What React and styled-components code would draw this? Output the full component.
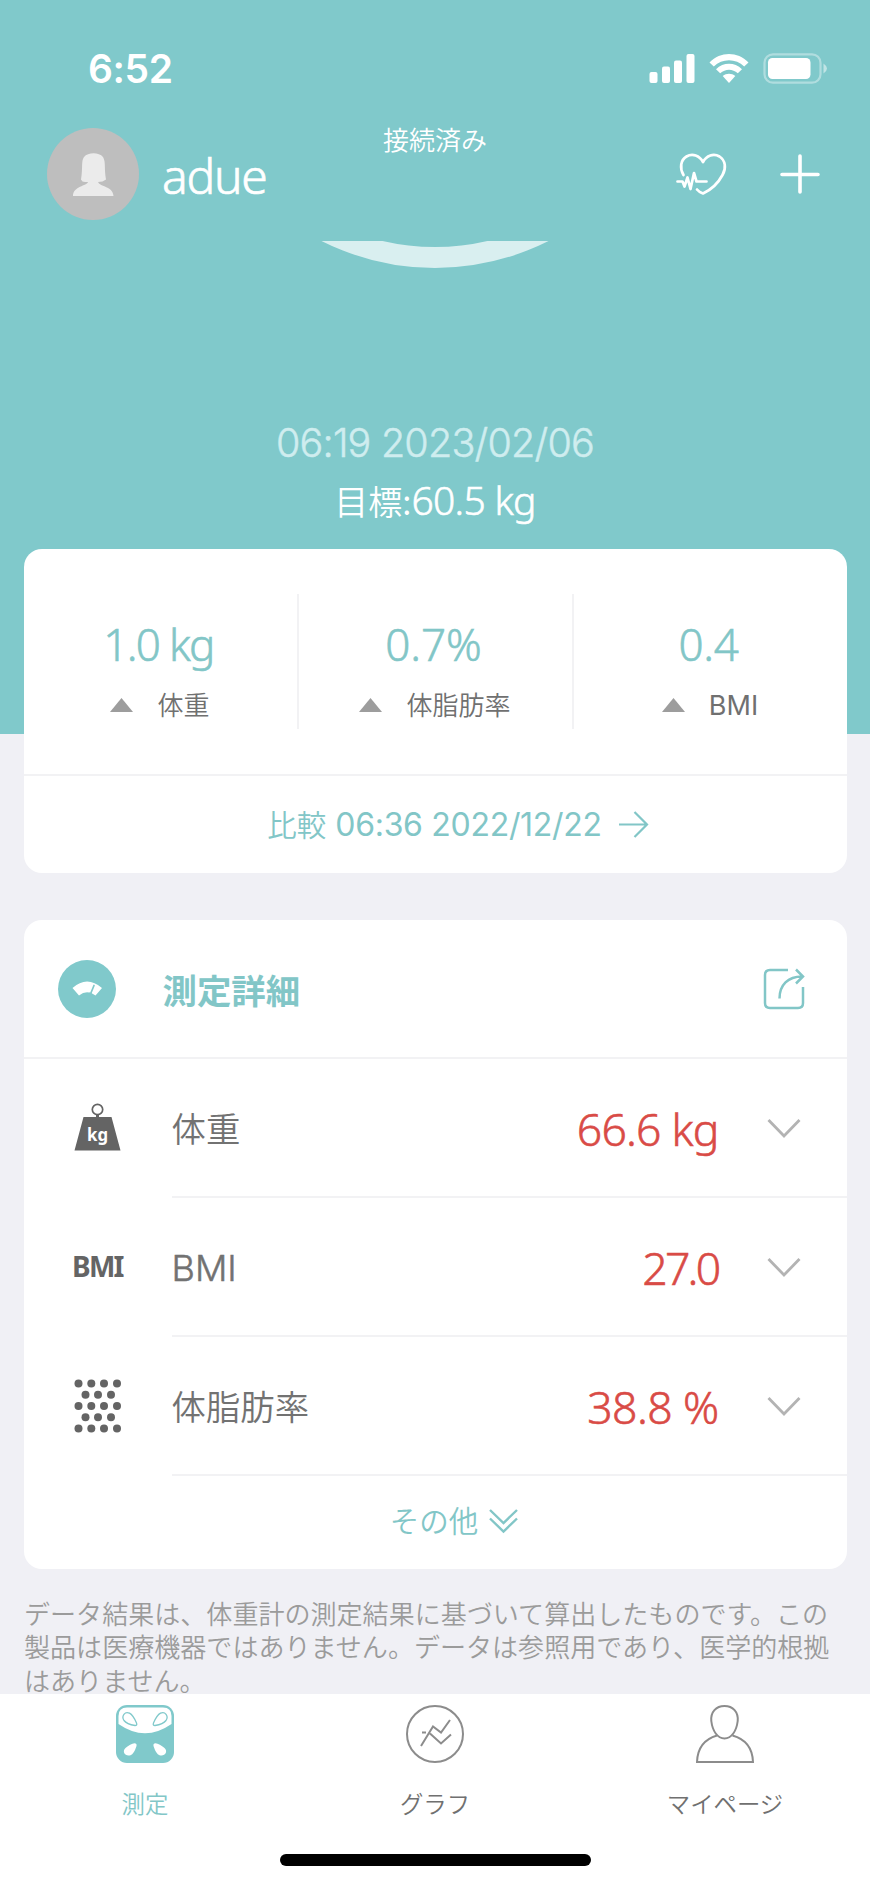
import React from "react";
import styled, { createGlobalStyle } from "styled-components";

const teal = "#80c9cb";
const tealText = "#82c6c7";
const line = "#f2f2f4";
const latin = `"Noto Sans", "Noto Sans CJK JP", sans-serif`;
const cjk = `"Noto Sans CJK JP", sans-serif`;
const inter = `Inter, "Noto Sans CJK JP", sans-serif`;

const Global = createGlobalStyle`
  * { box-sizing: border-box; }
  body { margin: 0; background: #f0f0f5; }
  svg { display: block; flex: none; }
`;

const Screen = styled.div`
  width: 870px;
  height: 1884px;
  display: flex;
  flex-direction: column;
  overflow: hidden;
  background: #f0f0f5;
  font-family: ${cjk};
  font-weight: 350;
`;

const Hero = styled.header`
  height: 734px;
  flex: none;
  background: ${teal};
  color: #fff;
`;

const StatusBar = styled.div`
  height: 128px;
  padding: 0 43px 0 88px;
  display: flex;
  justify-content: space-between;
  align-items: flex-start;
`;

const Clock = styled.div`
  margin-top: 45px;
  font: 600 39px/48px ${inter};
  letter-spacing: -0.4px;
`;

const StatusIcons = styled.div`
  margin-top: 53px;
  display: flex;
  gap: 14px;
`;

const ProfileBar = styled.div`
  height: 113px;
  padding: 0 50px 0 47px;
  display: grid;
  grid-template-columns: 92px 205px 1fr auto;
  align-items: start;
`;

const UserName = styled.div`
  padding-left: 23px;
  font: 300 48px/60px ${latin};
  -webkit-text-stroke: 0.7px currentColor;
  letter-spacing: ${(p) => p.$track}px;
  margin-top: 18px;
`;

const Connection = styled.div`
  width: 182px;
  text-align: center;
  font-size: 26px;
  line-height: 26px;
  margin-top: -2px;
`;

const Actions = styled.div`
  display: flex;
  gap: 52px;
  margin-top: 24px;
`;

const Gauge = styled.div`
  height: 181px;
  display: flex;
  justify-content: center;
`;

const Measured = styled.div`
  height: 42px;
  text-align: center;
  font: 300 39.5px/42px ${inter};
  -webkit-text-stroke: 0.5px currentColor;
  letter-spacing: ${(p) => p.$track}px;
  color: #cfedef;
`;

const Goal = styled.div`
  height: 86px;
  padding-top: 11px;
  display: flex;
  justify-content: center;
  align-items: baseline;
  font: 350 34px/50px ${cjk};
`;

const GoalValue = styled.span`
  font: 300 39px/50px ${latin};
  -webkit-text-stroke: 0.6px currentColor;
  letter-spacing: ${(p) => p.$track}px;
`;

const Card = styled.section`
  flex: none;
  width: 823px;
  margin: ${(p) => p.$top}px 0 0 23.5px;
  background: #fff;
  border-radius: 18px;
  overflow: hidden;
`;

const Summary = styled.div`
  height: 227px;
  display: grid;
  grid-template-columns: 275px 275px 1fr;
  padding-top: 45px;
  border-bottom: 2px solid ${line};
`;

const Stat = styled.div`
  height: 135px;
  padding-top: 22.5px;
  display: flex;
  flex-direction: column;
  align-items: center;
  border-right: ${(p) => (p.$last ? "0" : `2px solid ${line}`)};
`;

const StatValue = styled.div`
  margin-right: 3px;
  font: 300 44px/56px ${latin};
  -webkit-text-stroke: 0.6px currentColor;
  letter-spacing: ${(p) => p.$track}px;
  color: ${tealText};
`;

const StatLabel = styled.div`
  display: flex;
  align-items: center;
  gap: 24px;
  height: 30px;
  margin-top: 17.5px;
  color: #707070;
`;

const StatName = styled.span`
  margin-top: ${(p) => (p.$latin ? "2px" : "-2px")};
  font: ${(p) => (p.$latin ? `400 27px/30px ${inter}` : `350 26px/30px ${cjk}`)};
`;

const Compare = styled.div`
  height: 97px;
  padding-left: 46px;
  display: flex;
  align-items: center;
  justify-content: center;
  color: ${tealText};
  font: 350 29.5px/40px ${cjk};
`;

const CompareDate = styled.span`
  margin: 2px 17px 0 9px;
  font: 400 32px/40px ${inter};
  letter-spacing: ${(p) => p.$track}px;
`;

const CompareWord = styled.span`
  margin-top: -2px;
`;

const DetailHeader = styled.div`
  height: 139px;
  padding: 1px 42px 0 34px;
  display: flex;
  align-items: center;
  border-bottom: 2px solid ${line};
`;

const DetailTitle = styled.h2`
  flex: 1;
  margin: 0 0 0 47px;
  font: 700 34.4px/44px ${cjk};
  color: ${tealText};
`;

const Row = styled.div`
  height: 139px;
  display: grid;
  grid-template-columns: 148px 1fr;
`;

const RowIcon = styled.div`
  display: flex;
  align-items: center;
  padding: 0 0 ${(p) => p.$lift ?? 2}px 50px;
`;

const RowBody = styled.div`
  display: flex;
  align-items: center;
  padding-right: 46px;
  padding-top: 3px;
  border-bottom: 2px solid ${line};
`;

const RowLabel = styled.div`
  flex: 1;
  margin-top: ${(p) => (p.$latin ? "1px" : "-3px")};
  color: #727272;
  -webkit-text-stroke: ${(p) => (p.$latin ? "0.5px currentColor" : "0")};
  font: ${(p) => (p.$latin ? `300 36px/44px ${inter}` : `350 34.4px/44px ${cjk}`)};
`;

const RowValue = styled.div`
  padding-top: 1px;
  margin-right: 48px;
  font: 300 44.5px/60px ${latin};
  -webkit-text-stroke: 0.6px currentColor;
  letter-spacing: ${(p) => p.$track}px;
  color: #d94b46;
`;

const More = styled.div`
  height: 93px;
  padding-left: 38px;
  padding-bottom: 3px;
  display: flex;
  align-items: center;
  justify-content: center;
  gap: 11px;
  color: ${tealText};
  font: 350 29.5px/40px ${cjk};
`;

const MoreWord = styled.span`
  margin-top: -3px;
`;

const Notice = styled.p`
  height: 125px;
  margin: 0;
  padding: 28.5px 30px 0 24px;
  flex: none;
  color: #9b9b9b;
  font: 350 26.05px/33.3px ${cjk};
`;

const NoticeLine = styled.span`
  display: block;
  white-space: nowrap;
`;

const TabBar = styled.nav`
  height: 190px;
  flex: none;
  background: #fff;
  display: flex;
  flex-direction: column;
  align-items: center;
`;

const Tabs = styled.div`
  width: 870px;
  height: 160px;
  padding-top: 11px;
  display: grid;
  grid-template-columns: repeat(3, 1fr);
`;

const Tab = styled.div`
  display: flex;
  flex-direction: column;
  align-items: center;
  gap: 25px;
  font-size: 23.4px;
  line-height: 30px;
  color: ${(p) => (p.$active ? tealText : "#707070")};
`;

const HomeIndicator = styled.div`
  width: 311px;
  height: 12px;
  border-radius: 6px;
  background: #000;
`;

const Signal = () => (
  <svg width="46" height="31" fill="#fff">
    <rect x="0.5" y="19" width="8" height="11" rx="2" />
    <rect x="13" y="13.5" width="8" height="16.5" rx="2" />
    <rect x="25" y="7.5" width="8" height="22.5" rx="2" />
    <rect x="37.5" y="1" width="8" height="29" rx="2" />
  </svg>
);

const Wifi = () => (
  <svg width="40" height="31" fill="#fff">
    <path d="M.5 9.5C11.500-1.800 28.500-1.800 39.500 9.500L35.200 13.500C27 5.300 13 5.300 4.800 13.500Z" />
    <path d="M7 16.200C14.500 9 25.500 9 33 16.200L28.800 20.300C23.500 15.400 16.500 15.400 11.200 20.300Z" />
    <path d="M13.700 23C17.300 20 22.700 20 26.300 23L20 30Z" />
  </svg>
);

const Battery = () => (
  <svg width="64" height="32">
    <rect x="1.500" y="1.300" width="56" height="28.400" rx="8.500" fill="none" stroke="#fff" strokeOpacity=".38" strokeWidth="2.200" />
    <rect x="5" y="5" width="42.500" height="21" rx="4.500" fill="#fff" />
    <path d="M60.500 10.500Q64 13 64 15.500T60.500 20.500Z" fill="#fff" fillOpacity=".5" />
  </svg>
);

const Avatar = () => (
  <svg width="92" height="92">
    <circle cx="46" cy="46" r="46" fill="#bebebe" />
    <path d="M26 68C26 58 40 58 41 54H38Q35 54 34 51.500C36 40 34 33 37 29C41 24 52 24 56 29C59 34 57 40 59 51.500Q56 54 51 54C53 59 66 58 66.500 68Z" fill="#ebebeb" />
  </svg>
);

const HeartPulse = () => (
  <svg width="52" height="44" fill="none" stroke="#fff" strokeWidth="2.700" strokeLinecap="round" strokeLinejoin="round">
    <path d="M7.500 23C3.500 16 4.500 8 10.500 4.500C16.500 1 23.500 3.500 27 10C30.500 3.500 37.500 1 43.500 4.500C49.500 8.500 50.500 16 46.500 23C42.500 30.500 35.500 37.500 27 41.500Q23 40 21 37.500" />
    <path d="M1.500 29.500H6.500L8.500 34.500L11.500 25.500L14.500 37L18 21L20.500 29.500H30.500" />
  </svg>
);

const Plus = () => (
  <svg width="40" height="42" stroke="#fff" strokeWidth="3.600" strokeLinecap="round">
    <path d="M2 22.500H38M20 4V40" />
  </svg>
);

const GaugeArc = () => (
  <svg width="240" height="30" viewBox="0 0 240 30">
    <circle cx="120" cy="-225" r="241.500" fill="none" stroke="#d9eff0" strokeWidth="21" />
  </svg>
);

const Triangle = () => (
  <svg width="23" height="14">
    <path d="M0 14L11.500 0L23 14Z" fill="#9d9d9d" />
  </svg>
);

const Arrow = () => (
  <svg width="30" height="27" fill="none" stroke={tealText} strokeWidth="2.200">
    <path d="M0 13.500H28M15.500 1L28 13.500L15.500 26" />
  </svg>
);

const Dial = () => (
  <svg width="58" height="58">
    <circle cx="29" cy="29" r="29" fill={teal} />
    <path d="M14.500 28Q29 15 44 28L37.500 35.500Q29 29 21 35.500Z" fill="#fff" />
    <path d="M32.500 34L36 25.500" stroke={teal} strokeWidth="1.700" strokeLinecap="round" />
    <circle cx="31.500" cy="34.500" r="2" fill={teal} />
  </svg>
);

const Share = () => (
  <svg width="42" height="42" fill="none" stroke={tealText} strokeWidth="2.500">
    <path d="M25 2H7Q2 2 2 7V35Q2 40 7 40H35Q40 40 40 35V19" />
    <path d="M16.500 30.500C16.500 17 25 8.500 39 8.500M33 1.500L40 8.500L33 15.500" />
  </svg>
);

const Chevron = () => (
  <svg width="34" height="22" fill="none" stroke="#b3b3b3" strokeWidth="2.800">
    <path d="M1.500 2L17 18L32.500 2" />
  </svg>
);

const DoubleChevron = () => (
  <svg width="29" height="28" fill="none" stroke={tealText} strokeWidth="2.400">
    <path d="M1 3L14.500 16L28 3M1 11.500L14.500 24.500L28 11.500" />
  </svg>
);

const WeightIcon = () => (
  <svg width="48" height="50">
    <circle cx="23.500" cy="7.500" r="5.200" fill="none" stroke="#646464" strokeWidth="1.700" />
    <path d="M22 12.500H25V15H37.500L46.500 48.500H.5L9.500 15H22Z" fill="#646464" />
    <text x="23.500" y="38.500" textAnchor="middle" textLength="21" lengthAdjust="spacingAndGlyphs" fill="#fff" fontFamily="Noto Sans, sans-serif" fontWeight="700" fontSize="18">kg</text>
  </svg>
);

const BmiIcon = styled.span`
  margin-left: -1.5px;
  font: 700 28px/30px ${latin};
  letter-spacing: -1.7px;
  color: #646464;
`;

const FatIcon = () => (
  <svg width="48" height="54" fill="#646464">
    {[0, 1, 2, 3, 4].map((r) =>
      (r % 2 ? [11.500, 24, 37] : [4.500, 17.300, 30, 43]).map((x) => (
        <circle key={`${r}-${x}`} cx={x} cy={4.500 + r * 11.250} r="4" />
      ))
    )}
  </svg>
);

const ScaleTab = () => (
  <svg width="58" height="58">
    <rect width="58" height="58" rx="11" fill={teal} />
    <path d="M2.500 19V11Q2.500 2.500 11 2.500H47Q55.500 2.500 55.500 11V19Q29 37.500 2.500 19Z" fill="#fff" />
    <g fill="none" stroke={teal} strokeWidth="1.300">
      <path d="M20.500 18Q17 10 13.500 8.200C9 6 5 11 8 15.500C10.500 18.800 16 20 19 20.500Q21.500 20.500 20.500 18Z" />
      <path d="M37.500 18Q41 10 44.500 8.200C49 6 53 11 50 15.500C47.500 18.800 42 20 39 20.500Q36.500 20.500 37.500 18Z" />
    </g>
    <g fill="#fff">
      <path d="M20.500 41Q18 49 14.500 50.200C9.500 52 5.500 46.500 9.500 43C12.500 40.500 16 38.800 18.500 38.300Q21 38.500 20.500 41Z" />
      <path d="M37.500 41Q40 49 43.500 50.200C48.500 52 52.500 46.500 48.500 43C45.500 40.500 42 38.800 39.500 38.300Q37 38.500 37.500 41Z" />
    </g>
  </svg>
);

const GraphTab = () => (
  <svg width="58" height="58" fill="none" stroke="#8c8c8c" strokeWidth="2">
    <circle cx="29" cy="29" r="28" />
    <path d="M15 41L27 21.500L35 27.500L44 15M16 27.500H20M24 28.500L35 38.500L45 29.500" />
  </svg>
);

const UserTab = () => (
  <svg width="58" height="58" fill="none" stroke="#8c8c8c" strokeWidth="2">
    <path d="M28.500 1C20 1 14.500 7 15.300 16C16.500 26 21.500 33.500 28.500 33.500S40.500 26 41.700 16C42.500 7 37 1 28.500 1Z" />
    <path d="M21 30.500C9 34 1.500 43 1 57H57C56.500 43 49 34 36.500 30.500" />
  </svg>
);

export default function App() {
  return (
    <Screen>
      <Global />
      <Hero>
        <StatusBar>
          <Clock>6:52</Clock>
          <StatusIcons>
            <Signal />
            <Wifi />
            <Battery />
          </StatusIcons>
        </StatusBar>
        <ProfileBar>
          <Avatar />
          <UserName $track={-1.3}>adue</UserName>
          <Connection>接続済み</Connection>
          <Actions>
            <HeartPulse />
            <Plus />
          </Actions>
        </ProfileBar>
        <Gauge>
          <GaugeArc />
        </Gauge>
        <Measured $track={-0.8}>06:19 2023/02/06</Measured>
        <Goal>
          目標:<GoalValue $track={-0.7}>60.5 kg</GoalValue>
        </Goal>
      </Hero>

      <Card $top={-185.5}>
        <Summary>
          <Stat>
            <StatValue $track={-1.7}>1.0 kg</StatValue>
            <StatLabel><Triangle /><StatName>体重</StatName></StatLabel>
          </Stat>
          <Stat>
            <StatValue $track={-0.1}>0.7%</StatValue>
            <StatLabel><Triangle /><StatName>体脂肪率</StatName></StatLabel>
          </Stat>
          <Stat $last>
            <StatValue $track={-0.4}>0.4</StatValue>
            <StatLabel><Triangle /><StatName $latin>BMI</StatName></StatLabel>
          </Stat>
        </Summary>
        <Compare>
          <CompareWord>比較</CompareWord>
          <CompareDate $track={-0.3}>06:36 2022/12/22</CompareDate>
          <Arrow />
        </Compare>
      </Card>

      <Card $top={47}>
        <DetailHeader>
          <Dial />
          <DetailTitle>測定詳細</DetailTitle>
          <Share />
        </DetailHeader>
        <Row>
          <RowIcon><WeightIcon /></RowIcon>
          <RowBody>
            <RowLabel>体重</RowLabel>
            <RowValue $track={-0.8}>66.6 kg</RowValue>
            <Chevron />
          </RowBody>
        </Row>
        <Row>
          <RowIcon><BmiIcon>BMI</BmiIcon></RowIcon>
          <RowBody>
            <RowLabel $latin>BMI</RowLabel>
            <RowValue $track={-2.7}>27.0</RowValue>
            <Chevron />
          </RowBody>
        </Row>
        <Row>
          <RowIcon $lift={0}><FatIcon /></RowIcon>
          <RowBody>
            <RowLabel>体脂肪率</RowLabel>
            <RowValue $track={-0.6}>38.8 %</RowValue>
            <Chevron />
          </RowBody>
        </Row>
        <More>
          <MoreWord>その他</MoreWord>
          <DoubleChevron />
        </More>
      </Card>

      <Notice>
        <NoticeLine>データ結果は、体重計の測定結果に基づいて算出したものです。この</NoticeLine>
        <NoticeLine>製品は医療機器ではありません。データは参照用であり、医学的根拠</NoticeLine>
        <NoticeLine>はありません。</NoticeLine>
      </Notice>

      <TabBar>
        <Tabs>
          <Tab $active><ScaleTab />測定</Tab>
          <Tab><GraphTab />グラフ</Tab>
          <Tab><UserTab />マイページ</Tab>
        </Tabs>
        <HomeIndicator />
      </TabBar>
    </Screen>
  );
}
